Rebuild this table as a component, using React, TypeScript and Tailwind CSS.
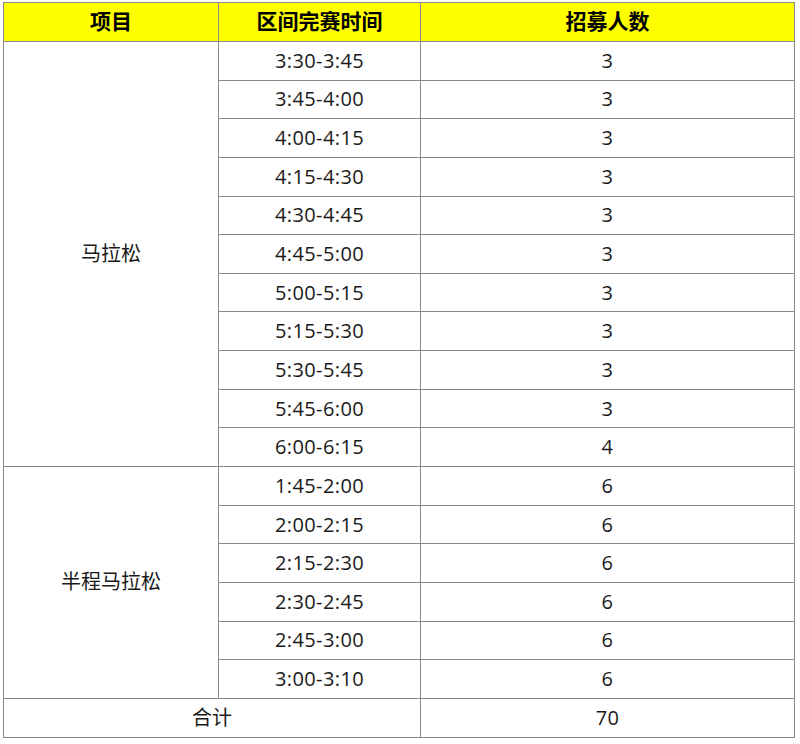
import React from "react";

const marathon = [
  ["3:30-3:45", "3"],
  ["3:45-4:00", "3"],
  ["4:00-4:15", "3"],
  ["4:15-4:30", "3"],
  ["4:30-4:45", "3"],
  ["4:45-5:00", "3"],
  ["5:00-5:15", "3"],
  ["5:15-5:30", "3"],
  ["5:30-5:45", "3"],
  ["5:45-6:00", "3"],
  ["6:00-6:15", "4"],
];
const half = [
  ["1:45-2:00", "6"],
  ["2:00-2:15", "6"],
  ["2:15-2:30", "6"],
  ["2:30-2:45", "6"],
  ["2:45-3:00", "6"],
  ["3:00-3:10", "6"],
];

const td = "border border-[#8a8a8a] text-center align-middle p-0";
const tdNum = "border border-[#8a8a8a] text-center align-middle p-0 tracking-[0.4px]";

export default function App() {
  return (
    <div
      className="w-[800px] h-[744px] bg-white pt-[2px] pl-[3px]"
      style={{ fontFamily: '"Open Sans", "Noto Sans CJK SC", sans-serif' }}
    >
      <table className="border-collapse table-fixed w-[792px] text-[20px] text-[#1a1a1a]">
        <colgroup>
          <col className="w-[215px]" />
          <col className="w-[202px]" />
          <col />
        </colgroup>
        <tbody>
          <tr className="h-[39px] bg-[#ffff00] font-bold text-black text-[21px]">
            <td className={td}>项目</td>
            <td className={td}>区间完赛时间</td>
            <td className={td}>招募人数</td>
          </tr>
          {marathon.map(([t, n], i) => (
            <tr key={t} className="h-[38.65px]">
              {i === 0 && (
                <td className={td} rowSpan={marathon.length}>
                  马拉松
                </td>
              )}
              <td className={tdNum}>{t}</td>
              <td className={tdNum}>{n}</td>
            </tr>
          ))}
          {half.map(([t, n], i) => (
            <tr key={t + "h"} className="h-[38.65px]">
              {i === 0 && (
                <td className={td} rowSpan={half.length}>
                  半程马拉松
                </td>
              )}
              <td className={tdNum}>{t}</td>
              <td className={tdNum}>{n}</td>
            </tr>
          ))}
          <tr className="h-[39px]">
            <td className={td} colSpan={2}>
              合计
            </td>
            <td className={tdNum}>70</td>
          </tr>
        </tbody>
      </table>
    </div>
  );
}
